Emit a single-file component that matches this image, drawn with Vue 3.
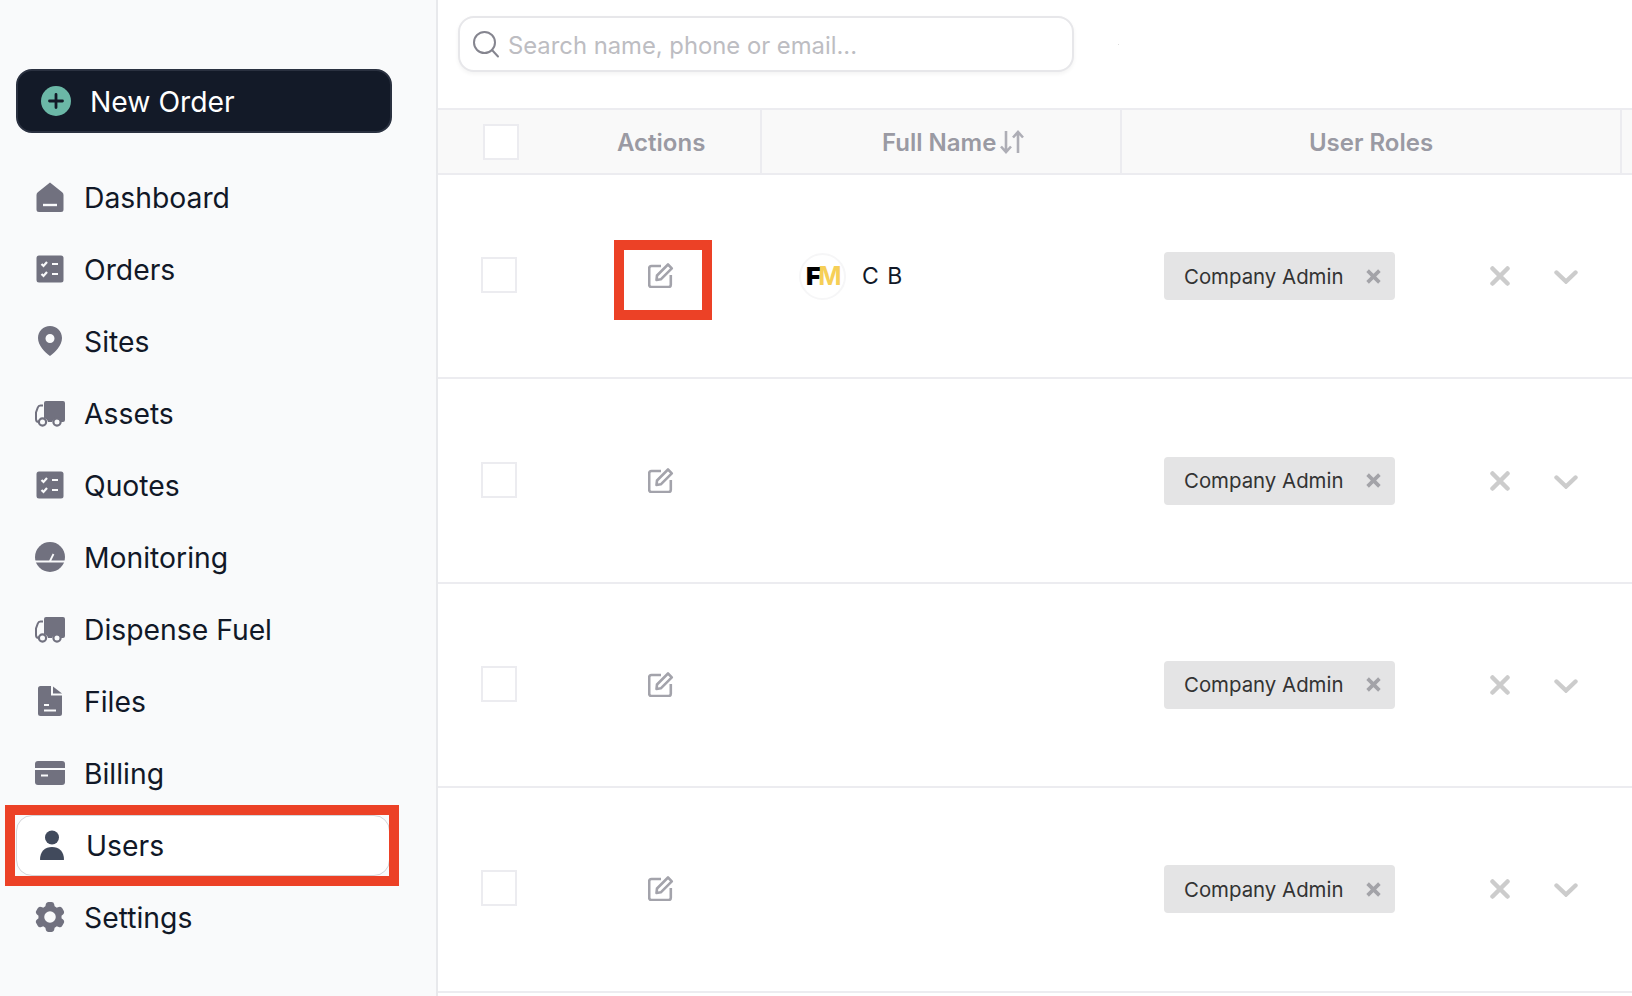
<script setup>
const navItems = [
  { label: 'Dashboard', icon: 'home' },
  { label: 'Orders', icon: 'check' },
  { label: 'Sites', icon: 'pin' },
  { label: 'Assets', icon: 'truck' },
  { label: 'Quotes', icon: 'check' },
  { label: 'Monitoring', icon: 'gauge' },
  { label: 'Dispense Fuel', icon: 'truck' },
  { label: 'Files', icon: 'file' },
  { label: 'Billing', icon: 'card' },
  { label: 'Users', icon: 'user', active: true },
  { label: 'Settings', icon: 'gear' }
]
const rows = [
  { id: 1, name: 'C B', mark: true },
  { id: 2, name: '' },
  { id: 3, name: '' },
  { id: 4, name: '' }
]
</script>

<template>
  <div class="page">
    <aside class="side">
      <button class="new-order">
        <svg class="plus" viewBox="0 0 30 30">
          <circle cx="15" cy="15" r="15" fill="#6bb8a7" />
          <path d="M15 8.500v13M8.500 15h13" stroke="#131a28" stroke-width="2.800" stroke-linecap="round" />
        </svg>
        <span class="lbl">New Order</span>
      </button>
      <nav class="nav">
        <a v-for="item in navItems" :key="item.label" class="item" :class="{ active: item.active }">
          <svg class="ico" viewBox="0 0 30 30">
            <template v-if="item.icon === 'home'">
              <path d="M15 .5 L2.800 10.200 Q1.500 11.200 1.500 13 V27.500 Q1.500 30 4 30 H26 Q28.500 30 28.500 27.500 V13 Q28.500 11.200 27.200 10.200 Z" fill="#71717f" />
              <path d="M8 23h14" stroke="#f9fafb" stroke-width="2.400" />
            </template>
            <template v-else-if="item.icon === 'check'">
              <rect x="1.500" y="1.500" width="27" height="27" rx="2.500" fill="#71717f" />
              <path d="M6.500 10l2 2 3.500-4M6.500 20l2 2 3.500-4M17 10h6M17 20h6" fill="none" stroke="#f9fafb" stroke-width="2.200" />
            </template>
            <template v-else-if="item.icon === 'pin'">
              <path fill-rule="evenodd" d="M15 0C8.200 0 3 5.200 3 12c0 7.500 7 14.500 12 18 5-3.500 12-10.500 12-18C27 5.200 21.800 0 15 0Zm0 8a4.500 4.500 0 1 1 0 9 4.500 4.500 0 0 1 0-9Z" fill="#71717f" />
            </template>
            <template v-else-if="item.icon === 'truck'">
              <path d="M9 5q0-2 2-2h17q2 0 2 2v17q0 2-2 2h-2.500a4.500 4.500 0 0 0-8.500 0h-4a5 5 0 0 0-4-3.800Z" fill="#71717f" />
              <path d="M8 7.500H5.500Q3.500 7.500 2.800 9.500L1 14.500V21q0 2.500 2 3" fill="none" stroke="#71717f" stroke-width="2" />
              <circle cx="7.500" cy="24" r="3.600" fill="none" stroke="#71717f" stroke-width="2.200" />
              <circle cx="22" cy="24" r="3.600" fill="none" stroke="#71717f" stroke-width="2.200" />
            </template>
            <template v-else-if="item.icon === 'gauge'">
              <circle cx="15" cy="15" r="15" fill="#71717f" />
              <path d="M0 19.500h30M15 19l3.500-7" stroke="#f9fafb" stroke-width="1.800" />
            </template>
            <template v-else-if="item.icon === 'file'">
              <path d="M3 2.500Q3 0 5.500 0H16v9.500h11v18q0 2.500-2.500 2.500h-19Q3 30 3 27.500Z" fill="#71717f" />
              <path d="M18 .5 27 7.500H18Z" fill="#71717f" />
              <path d="M9 19h5M9 24.500h12" stroke="#f9fafb" stroke-width="2" />
            </template>
            <template v-else-if="item.icon === 'card'">
              <rect x="0" y="3" width="30" height="24" rx="3" fill="#71717f" />
              <path d="M0 11h30M6 17.500h7" stroke="#f9fafb" stroke-width="2" />
            </template>
            <template v-else-if="item.icon === 'user'">
              <circle cx="15" cy="7.500" r="7" fill="#414a5c" />
              <path d="M3 29.500c0-8 5-12.500 12-12.500s12 4.500 12 12.500Q27 30 26 30H4Q3 30 3 29.500Z" fill="#414a5c" />
            </template>
            <template v-else>
              <path transform="scale(1.5385) translate(-2.250 -2.250)" fill-rule="evenodd" clip-rule="evenodd" d="M11.078 2.250c-.917 0-1.699.663-1.850 1.567L9.050 4.889c-.020.120-.115.260-.297.348a7.493 7.493 0 0 0-.986.570c-.166.115-.334.126-.450.083L6.300 5.508a1.875 1.875 0 0 0-2.282.819l-.922 1.597a1.875 1.875 0 0 0 .432 2.385l.840.692c.095.078.170.229.154.430a7.598 7.598 0 0 0 0 1.139c.015.200-.059.352-.153.430l-.841.692a1.875 1.875 0 0 0-.432 2.385l.922 1.597a1.875 1.875 0 0 0 2.282.818l1.019-.382c.115-.043.283-.031.450.082.312.214.641.405.985.570.182.088.277.228.297.350l.178 1.071c.151.904.933 1.567 1.850 1.567h1.844c.916 0 1.699-.663 1.850-1.567l.178-1.072c.020-.120.114-.260.297-.349.344-.165.673-.356.985-.570.167-.114.335-.125.450-.082l1.020.382a1.875 1.875 0 0 0 2.280-.819l.923-1.597a1.875 1.875 0 0 0-.432-2.385l-.840-.692c-.095-.078-.170-.229-.154-.430a7.614 7.614 0 0 0 0-1.139c-.016-.200.059-.352.153-.430l.840-.692c.708-.582.891-1.590.433-2.385l-.922-1.597a1.875 1.875 0 0 0-2.282-.818l-1.020.382c-.114.043-.282.031-.449-.083a7.490 7.490 0 0 0-.985-.570c-.183-.087-.277-.227-.297-.348l-.179-1.072a1.875 1.875 0 0 0-1.850-1.567h-1.843ZM12 15.750a3.750 3.750 0 1 0 0-7.500 3.750 3.750 0 0 0 0 7.500Z" fill="#71717f" />
            </template>
          </svg>
          <span class="lbl">{{ item.label }}</span>
          <i v-if="item.active" class="mark-side"></i>
        </a>
      </nav>
    </aside>

    <main class="main">
      <div class="top">
        <div class="search">
          <svg class="glass" viewBox="0 0 28 28">
            <circle cx="12.500" cy="12.500" r="10.500" fill="none" stroke="#85858f" stroke-width="2" />
            <path d="M20 20l6 6.500" stroke="#85858f" stroke-width="2" stroke-linecap="round" />
          </svg>
          <span class="lbl">Search name, phone or email...</span>
        </div>
        <i class="speck"></i>
      </div>

      <div class="thead">
        <div class="th c1"><span class="box head-box"></span><span class="act-label lbl">Actions</span></div>
        <div class="th c2">
          <span class="lbl">Full Name</span>
          <svg class="sort" viewBox="0 0 26 26">
            <path d="M7 2v21M2 17.500 7 23l5-5.500M19 24V3M14 8.500 19 3l5 5.500" fill="none" stroke="#aeaeb6" stroke-width="2.600" />
          </svg>
        </div>
        <div class="th c3"><span class="lbl">User Roles</span></div>
        <div class="th c4"></div>
      </div>

      <div v-for="row in rows" :key="row.id" class="tr">
        <div class="c1 cell">
          <span class="box"></span>
          <span class="edit-wrap">
            <svg class="edit" viewBox="0 0 26 26">
              <path d="M13 4H3.500Q1.200 4 1.200 6.300v16.500q0 2.200 2.300 2.200h17q2.300 0 2.300-2.200V13" fill="none" stroke="#a3a3ab" stroke-width="2.600" />
              <path d="M9 13.500 20 2.500l3.800 3.800-11 11L8.500 18Z" fill="none" stroke="#a3a3ab" stroke-width="2.600" stroke-linejoin="round" />
            </svg>
            <i v-if="row.mark" class="mark-edit"></i>
          </span>
        </div>
        <div class="c2 cell name">
          <template v-if="row.name">
            <span class="avatar"><b class="f">F</b><b class="m">M</b></span>
            <span class="who">{{ row.name }}</span>
          </template>
        </div>
        <div class="c3 cell">
          <span class="chip">
            <span>Company Admin</span>
            <svg class="chip-x" viewBox="0 0 14 14"><path d="M1.500 1.500l11 11M12.500 1.500l-11 11" stroke="#a3a3a8" stroke-width="3.400" /></svg>
          </span>
          <svg class="clear" viewBox="0 0 20 20"><path d="M2.500 2.500l15 15M17.500 2.500l-15 15" stroke="#cccccc" stroke-width="4.500" stroke-linecap="round" /></svg>
          <svg class="chev" viewBox="0 0 24 14"><path d="M2.500 2.500 12 11.500l9.500-9" fill="none" stroke="#cccccc" stroke-width="4.400" stroke-linecap="round" /></svg>
        </div>
      </div>
    </main>
  </div>
</template>

<style>
html, body { margin: 0; background: #fff; overflow: hidden; }
</style>

<style scoped>
.page {
  display: flex;
  width: 1632px;
  height: 996px;
  overflow: hidden;
  font-family: Inter, "Liberation Sans", sans-serif;
  color: #111827;
}
.lbl { padding-top: 2px; }
.side {
  width: 436px;
  flex: none;
  background: #f9fafb;
  border-right: 2px solid #e8e9ec;
  padding-top: 69px;
}
.new-order {
  display: flex;
  align-items: center;
  gap: 19px;
  width: 376px;
  height: 64px;
  margin: 0 0 28px 16px;
  padding: 0 0 0 23px;
  box-sizing: border-box;
  background: #131a28;
  border: 2px solid #2a3140;
  border-radius: 16px;
  color: #fff;
  font: 400 28.3px Inter, sans-serif;
}
.plus { width: 30px; height: 30px; flex: none; }
.nav { display: flex; flex-direction: column; }
.item {
  position: relative;
  display: flex;
  align-items: center;
  gap: 19px;
  height: 72px;
  margin: 0 46px 0 16px;
  padding-left: 19px;
  font-size: 28.3px;
  box-sizing: border-box;
}
.item.active {
  height: 61px;
  margin-top: 5.5px;
  margin-bottom: 5.5px;
  background: #fff;
  border: 1px solid #d4d4d8;
  border-radius: 16px;
  padding-left: 20px;
}
.ico { width: 30px; height: 30px; flex: none; }
.mark-side {
  position: absolute;
  left: -12px;
  top: -10.5px;
  width: 374px;
  height: 61px;
  border: 10px solid #ec4126;
}
.main { flex: 1; min-width: 0; }
.top {
  display: flex;
  align-items: center;
  height: 108px;
  padding: 0 0 20px 20px;
  box-sizing: border-box;
}
.search {
  display: flex;
  align-items: center;
  gap: 8px;
  width: 616px;
  height: 56px;
  box-sizing: border-box;
  padding-left: 12px;
  background: #fff;
  border: 2px solid #e7e7ea;
  border-radius: 16px;
  box-shadow: 0 2px 4px rgba(0, 0, 0, 0.05);
  color: #bdbdc2;
  font-size: 23.8px;
}
.speck {
  width: 1px;
  height: 1px;
  margin-left: 44px;
  background: #dddddd;
}
.glass { width: 28px; height: 28px; flex: none; }
.thead {
  display: flex;
  height: 67px;
  box-sizing: border-box;
  background: #f9f9f9;
  border-top: 2px solid #ececf0;
  border-bottom: 2px solid #ececf0;
}
.th {
  display: flex;
  align-items: center;
  box-sizing: border-box;
  border-right: 2px solid #ececf0;
  color: #9a9aa3;
  font-size: 24px;
  font-weight: 600;
}
.c1 { width: 324px; flex: none; box-sizing: border-box; }
.c2 { width: 360px; flex: none; box-sizing: border-box; }
.c3 { width: 500px; flex: none; box-sizing: border-box; }
.c4 { flex: 1; border-right: 0; }
.th.c1 { padding-left: 45px; }
.th.c2 { padding-left: 120px; gap: 3px; }
.th.c3 { justify-content: center; }
.box {
  display: block;
  width: 36px;
  height: 36px;
  flex: none;
  box-sizing: border-box;
  background: #fff;
  border: 2px solid #ececf0;
}
.act-label { margin-left: 98px; }
.sort { width: 26px; height: 26px; flex: none; }
.tr {
  display: flex;
  height: 204.4px;
  box-sizing: border-box;
  border-bottom: 2px solid #ececf0;
}
.cell { display: flex; align-items: center; }
.tr .c1 { padding-left: 43px; }
.tr .box { margin-top: -2px; }
.edit-wrap {
  position: relative;
  display: flex;
  margin: -2px 0 0 131px;
}
.edit { width: 26px; height: 26px; }
.mark-edit {
  position: absolute;
  left: -34px;
  top: -22px;
  width: 78px;
  height: 60px;
  border: 10px solid #ec4126;
}
.name { padding-left: 37px; }
.avatar {
  display: flex;
  align-items: center;
  justify-content: center;
  width: 47px;
  height: 47px;
  box-sizing: border-box;
  border: 2px solid #f6f6f7;
  border-radius: 50%;
  font-size: 25px;
  letter-spacing: -2.5px;
}
.f { color: #000; font-weight: 900; }
.m { color: #f6cf57; font-weight: 700; }
.who { margin-left: 16px; font-size: 23px; letter-spacing: 1px; }
.chip {
  display: flex;
  align-items: center;
  justify-content: space-between;
  width: 231px;
  height: 48px;
  margin-left: 42px;
  padding: 0 14px 0 20px;
  box-sizing: border-box;
  background: #e4e4e5;
  border-radius: 4px;
  color: #333333;
  font-size: 20.4px;
}
.chip-x { width: 15px; height: 15px; }
.clear { width: 20px; height: 20px; margin-left: 95px; }
.chev { width: 24px; height: 14px; margin: 2px 0 0 44px; }
</style>
